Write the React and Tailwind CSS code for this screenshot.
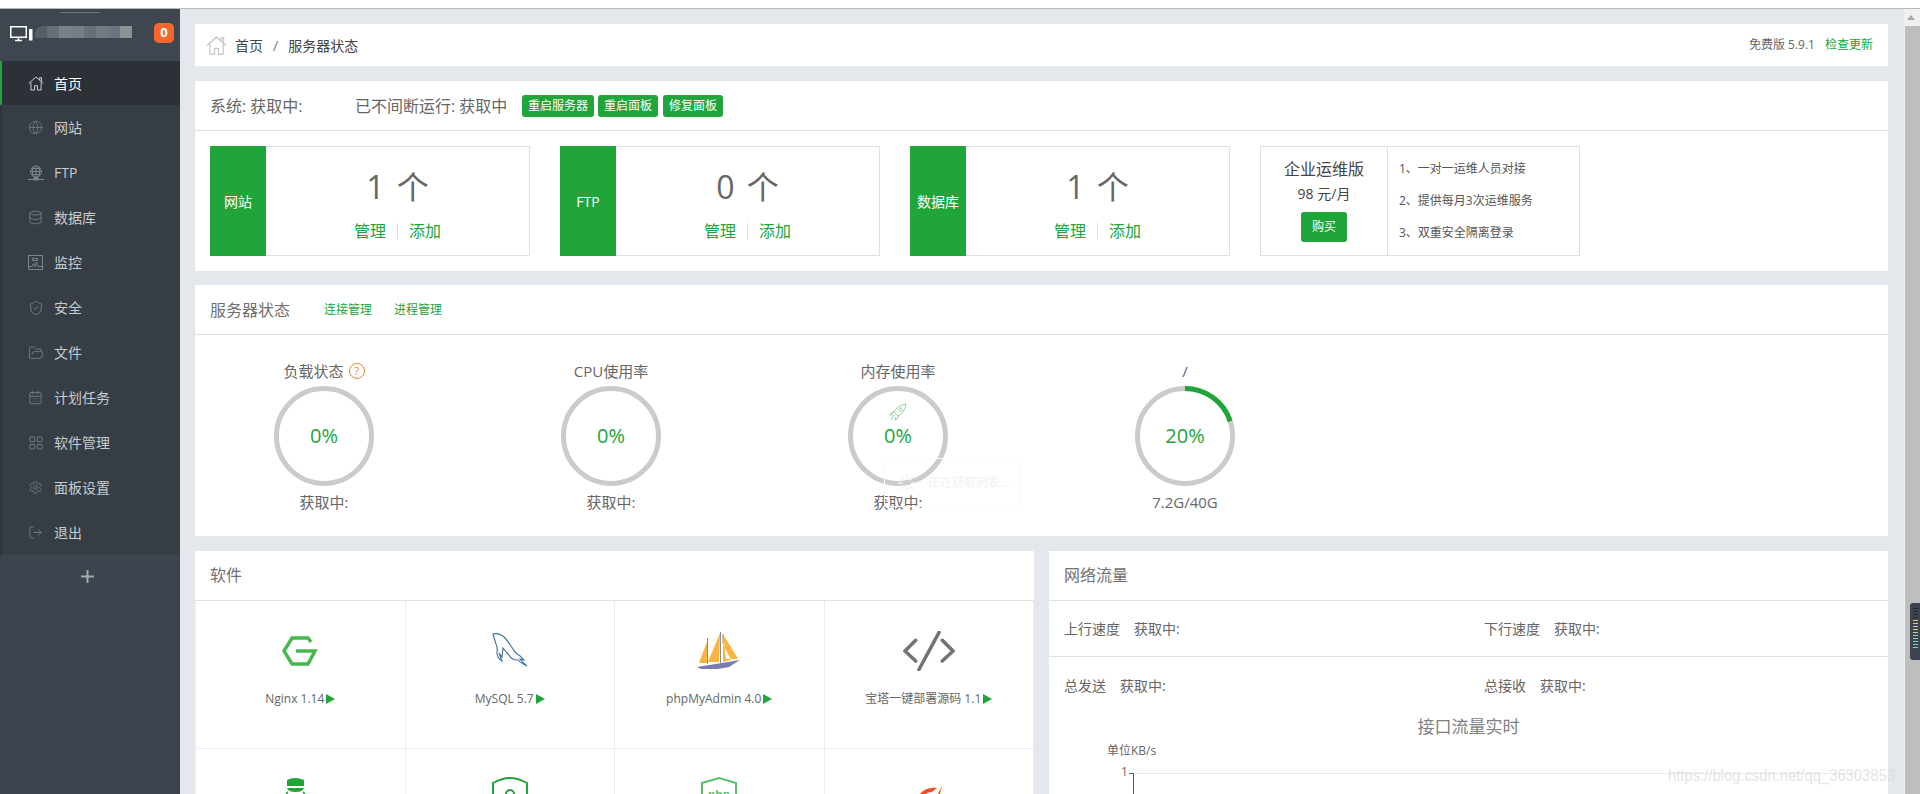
import React from 'react';
import { Globe, Database, ShieldCheck, FolderOpen, CalendarDays, LayoutGrid, Settings, LogOut } from 'lucide-react';

const HomeIcon = ({ className }) => (
    <svg viewBox="0 0 22 20" fill="none" stroke="currentColor" strokeWidth="1.3" className={className}>
        <path d="M1 10 11 1l10 9M16 5V2h2.5v5.5M4 8.5V19h5v-6h4v6h5V8.5" />
    </svg>
);

const FtpIcon = () => (
    <svg viewBox="0 0 16 16" fill="none" stroke="currentColor" strokeWidth="1" className="h-[16px] w-[16px]">
        <circle cx="8" cy="6.5" r="5.5" />
        <path d="M2.5 6.5h11M8 1v11M5.5 1.5c-1.6 3-1.6 7 0 10M10.5 1.5c1.6 3 1.6 7 0 10M3.5 3.5h9M3.5 9.5h9M0 14.5h16" />
        <rect x="6" y="12.5" width="4" height="2.5" fill="currentColor" />
    </svg>
);

const MonitorIcon = () => (
    <svg viewBox="0 0 15 15" fill="none" stroke="currentColor" strokeWidth="1" className="h-[15px] w-[15px]">
        <rect x="0.5" y="0.5" width="14" height="14" />
        <path d="M1 11.5h3l1.5-3 1.5 3 1.5-4.5 1.5 4.5H14M4.5 3.5h5v2h-5z" />
    </svg>
);

const menu = [
    { name: '首页', icon: <HomeIcon className="h-[15px] w-[16px]" />, active: true },
    { name: '网站', icon: <Globe size={15} strokeWidth={1.2} /> },
    { name: 'FTP', icon: <FtpIcon /> },
    { name: '数据库', icon: <Database size={15} strokeWidth={1.3} /> },
    { name: '监控', icon: <MonitorIcon /> },
    { name: '安全', icon: <ShieldCheck size={16} strokeWidth={1.3} /> },
    { name: '文件', icon: <FolderOpen size={16} strokeWidth={1.3} /> },
    { name: '计划任务', icon: <CalendarDays size={15} strokeWidth={1.3} /> },
    { name: '软件管理', icon: <LayoutGrid size={16} strokeWidth={1.3} /> },
    { name: '面板设置', icon: <Settings size={15} strokeWidth={1.2} /> },
    { name: '退出', icon: <LogOut size={15} strokeWidth={1.3} /> },
];

const mosaic = ['bg-[#565e67]', 'bg-[#666e76]', 'bg-[#78808a]', 'bg-[#777f86]', 'bg-[#686f77]', 'bg-[#747a82]', 'bg-[#6b7680]', 'bg-[#8d9297]'];

const Sidebar = () => (
    <aside className="relative flex w-[180px] shrink-0 flex-col bg-[#3c444d]">
        <div className="absolute left-[60px] top-[3px] h-px w-[40px] bg-[#6d747b]" />
        <div className="flex h-[52px] items-start bg-[#3e464f] pl-[10px] pt-[17px]">
            <svg viewBox="0 0 23 16" fill="none" stroke="#fff" className="h-[16px] w-[23px] shrink-0">
                <rect x="0.75" y="0.75" width="15.5" height="10.5" strokeWidth="1.5" />
                <path d="M5 14.5h7M8.5 12v2" strokeWidth="1.5" />
                <rect x="19" y="3" width="3.5" height="11.5" fill="#fff" stroke="none" />
            </svg>
            <div className="ml-[2px] flex h-[12px] w-[97px] overflow-hidden rounded-tl-[8px]">
                {mosaic.map((c, i) => <div key={i} className={'h-full flex-1 ' + c} />)}
            </div>
            <div className="ml-[22px] -mt-[3px] flex h-[20px] w-[20px] items-center justify-center rounded-[5px] bg-[#f7672b] text-[13px] font-bold text-white">0</div>
        </div>
        <nav className="bg-[#363d44]">
            {menu.map((m, i) => (
                <div key={m.name} className={'flex items-center border-l-2 pl-[26px] text-[14px] ' + (i === 0 ? 'h-[44px] ' : 'h-[45px] ') + (m.active ? 'border-[#20a53a] bg-[#2c3138] text-white' : 'border-[#2f353b] text-[#c8ccd0]')}>
                    <span className={'flex w-[26px] shrink-0 ' + (m.active ? 'text-[#d5d7da]' : 'text-[#7b8289]')}>{m.icon}</span>
                    {m.name}
                </div>
            ))}
        </nav>
        <div className="flex h-[42px] items-center justify-center pr-[6px] text-[#a5aab0]">
            <svg viewBox="0 0 13 13" stroke="currentColor" strokeWidth="2" className="h-[13px] w-[13px]"><path d="M6.5 0v13M0 6.5h13" /></svg>
        </div>
    </aside>
);

const StatCard = ({ label, count }) => (
    <div className="flex h-[110px] w-[320px] border border-[#dde1e6]">
        <div className="-my-px -ml-px flex w-[56px] shrink-0 items-center justify-center bg-[#20a53a] pt-[1px] text-[14px] text-white">{label}</div>
        <div className="flex flex-1 flex-col items-center">
            <div className="mt-[16px] h-[48px] text-[32px] leading-[48px] text-[#666] [word-spacing:4px]">{count} 个</div>
            <div className="mt-[8px] flex items-center text-[16px] leading-[24px] text-[#20a53a]">
                管理<span className="mx-[11px] h-[16px] w-px bg-[#ddd]" />添加
            </div>
        </div>
    </div>
);

const Ring = ({ percent, rocket }) => (
    <div className="relative flex h-[100px] w-[100px] items-center justify-center">
        <svg viewBox="0 0 100 100" className="absolute inset-0 h-[100px] w-[100px] -rotate-90" fill="none">
            <circle cx="50" cy="50" r="47.5" stroke="#cbcbcb" strokeWidth="5" />
            {percent > 0 && <circle cx="50" cy="50" r="47.5" stroke="#20a53a" strokeWidth="5" pathLength="100" strokeDasharray={`${percent} 100`} />}
        </svg>
        {rocket && (
            <svg viewBox="0 0 18 18" fill="none" stroke="#6cc57c" strokeWidth="0.8" className="absolute left-[41px] top-[17px] h-[18px] w-[18px]">
                <path d="M5 9c2-4 6-7 12-8-1 6-4 10-8 12zM5 9 2.5 9.5 1 12l3-.5M9 13l-.5 2.5L6 17l.5-3M5 12l-3 5" />
                <circle cx="11.5" cy="6.5" r="1.5" />
            </svg>
        )}
        <span className="relative text-[20px] text-[#20a53a]">{percent}%</span>
    </div>
);

const Gauge = ({ title, percent, note, help, rocket }) => (
    <div className="flex w-[200px] shrink-0 flex-col items-center text-[15px] text-[#666]">
        <div className="flex h-[24px] items-center leading-[24px]">
            {title}
            {help && <span className="ml-[5px] flex h-[16px] w-[16px] items-center justify-center rounded-full border border-[#f0862a] text-[11px] text-[#f0862a]">?</span>}
        </div>
        <div className="mt-[3px]"><Ring percent={percent} rocket={rocket} /></div>
        <div className="mt-[4px] leading-[24px]">{note}</div>
    </div>
);

const Arrow = () => <span className="ml-[2px] h-0 w-0 border-y-[5px] border-l-[9px] border-y-transparent border-l-[#20a53a]" />;

const soft = [
    {
        name: 'Nginx 1.14',
        icon: (
            <svg viewBox="0 0 36 30" fill="none" stroke="#46b64e" strokeWidth="3.4" className="h-[30px] w-[36px]">
                <path d="M29 6 26 2H10L2 15l8 13h16l7-13H14" />
            </svg>
        ),
    },
    {
        name: 'MySQL 5.7',
        icon: (
            <svg viewBox="0 0 36 36" fill="none" stroke="#3e7196" strokeWidth="1.1" className="h-[36px] w-[36px]">
                <path d="M1 1c4-1 8 0 12 4 5 5 7 11 11 15 3 2 5 3 8 7l-4-1c2 3 5 5 7 7-3-2-7-3-9-6-4 0-7-1-9-5-2-2-4-4-6-7l-1 9-3-4 3 8c-3-2-5-4-5-8 0-3 1-6-1-9-1-3-2-6-3-10z" />
            </svg>
        ),
    },
    {
        name: 'phpMyAdmin 4.0',
        icon: (
            <svg viewBox="0 0 44 38" className="h-[38px] w-[44px]">
                <path d="M11 7 2 31h8zM23 1 11 30h11zM26 2l15 25-12 0zM26 12v18l8-2z" fill="#fdb33c" />
                <path d="M10.5 6v26M23.5 0v31M26 2v10" stroke="#8a8a8a" strokeWidth="1" fill="none" />
                <path d="M0 35 43 28l-11 7-11 2H4z" fill="#7a7cb0" />
            </svg>
        ),
    },
    {
        name: '宝塔一键部署源码 1.1',
        icon: (
            <svg viewBox="0 0 52 40" fill="none" stroke="#737373" strokeWidth="3.6" strokeLinecap="round" className="h-[40px] w-[52px]">
                <path d="M12.7 9.3 2 20l10.7 10M36 1.5 16 38.5M39.3 9.3 50 20 39.3 30" />
            </svg>
        ),
    },
    {
        name: '',
        icon: (
            <svg viewBox="0 0 40 40" className="h-[40px] w-[40px] overflow-visible">
                <path d="M7 -1Q15 -5 24 -1V5H7z" fill="#20a53a" />
                <path d="M7 7H24Q23 11 15.5 11T7 7z" fill="#20a53a" />
                <path d="M8 11C4 14 5 20 5 24M23 11c4 3 3 9 3 13" stroke="#20a53a" strokeWidth="1.6" fill="none" />
            </svg>
        ),
    },
    {
        name: '',
        icon: (
            <svg viewBox="0 0 40 40" className="h-[40px] w-[40px] overflow-visible">
                <path d="M3 2Q12 -3 20 -3T37 2V30H3z" fill="none" stroke="#20a53a" strokeWidth="2" />
                <path d="M16 16v-3a4 4 0 0 1 8 0v3v14h-8z" fill="none" stroke="#20a53a" strokeWidth="2" />
            </svg>
        ),
    },
    {
        name: '',
        icon: (
            <svg viewBox="0 0 40 40" className="h-[40px] w-[40px] overflow-visible">
                <path d="M3 2 20 -3 37 2V30H3z" fill="none" stroke="#5cbf6b" strokeWidth="2" />
                <text x="20" y="18" textAnchor="middle" fontSize="12" fontWeight="700" fill="#5cbf6b" fontFamily="Liberation Sans, sans-serif">php</text>
            </svg>
        ),
    },
    {
        name: '',
        icon: (
            <svg viewBox="0 0 40 40" className="h-[40px] w-[40px] overflow-visible">
                <path d="M5 30C5 14 16 5 28 7l-5 4C15 11 11 19 12 30z" fill="#f1501f" />
                <path d="M33 5l-2 8-3 2z" fill="#f1501f" />
            </svg>
        ),
    },
];

const SoftCell = ({ item, first }) => (
    <div className={'flex h-[148px] flex-col items-center border-b border-r border-[#ececf6] ' + (first ? 'pt-[30px]' : 'pt-[32px]')}>
        <div className="flex h-[40px] items-center justify-center">{item.icon}</div>
        {item.name && (
            <div className="mt-[18px] flex h-[20px] items-center text-[12px] text-[#666]">
                {item.name}<Arrow />
            </div>
        )}
    </div>
);

const Stat = ({ label, className }) => (
    <div className={'flex gap-[14px] ' + className}>
        <span>{label}</span><span>获取中:</span>
    </div>
);

const App = () => (
    <div className="relative flex h-[794px] flex-col overflow-hidden bg-white font-['Open_Sans','Noto_Sans_CJK_SC',sans-serif]">
        <div className="h-[9px] shrink-0 border-b border-[#b8b8b8] bg-white" />
        <div className="flex min-h-0 flex-1">
            <Sidebar />
            <main className="flex min-w-0 flex-1 flex-col overflow-hidden bg-[#e4e7ec] pl-[15px] pr-[16px] pt-[15px]">
                <div className="flex h-[42px] shrink-0 items-center justify-between bg-white pl-[11px] pr-[15px]">
                    <div className="flex items-center text-[14px] text-[#444]">
                        <HomeIcon className="mr-[8px] h-[19px] w-[21px] text-[#c6c6c6]" />
                        首页<span className="mx-[10px] text-[#777]">/</span>服务器状态
                    </div>
                    <div className="flex items-center gap-[10px] text-[12px] text-[#666]">
                        免费版 5.9.1<span className="text-[#20a53a]">检查更新</span>
                    </div>
                </div>

                <section className="mt-[15px] h-[190px] shrink-0 bg-white">
                    <div className="flex h-[50px] items-center border-b border-[#e0e0e0] pl-[15px] text-[16px] text-[#666]">
                        <span className="w-[145px]">系统: 获取中:</span>
                        <span className="w-[167px] whitespace-nowrap">已不间断运行: 获取中</span>
                        <div className="flex gap-[4px] text-[12px] text-white">
                            <span className="flex h-[22px] w-[72px] items-center justify-center rounded-[3px] bg-[#20a53a]">重启服务器</span>
                            <span className="flex h-[22px] w-[60px] items-center justify-center rounded-[3px] bg-[#20a53a]">重启面板</span>
                            <span className="ml-[1px] flex h-[22px] w-[60px] items-center justify-center rounded-[3px] bg-[#20a53a]">修复面板</span>
                        </div>
                    </div>
                    <div className="flex gap-[30px] pl-[15px] pt-[15px]">
                        <StatCard label="网站" count={1} />
                        <StatCard label="FTP" count={0} />
                        <StatCard label="数据库" count={1} />
                        <div className="flex h-[110px] w-[320px] border border-[#dfdfdf]">
                            <div className="flex w-[127px] flex-col items-center border-r border-[#dfdfdf] text-[#444]">
                                <div className="mt-[10px] text-[16px] leading-[24px]">企业运维版</div>
                                <div className="text-[14px] leading-[26px]">98 元/月</div>
                                <div className="mt-[5px] flex h-[30px] w-[46px] items-center justify-center rounded-[3px] bg-[#20a53a] text-[12px] text-white">购买</div>
                            </div>
                            <div className="flex flex-col gap-[12px] pl-[11px] pt-[12px] text-[12px] leading-[20px] text-[#555]">
                                <div>1、一对一运维人员对接</div>
                                <div>2、提供每月3次运维服务</div>
                                <div>3、双重安全隔离登录</div>
                            </div>
                        </div>
                    </div>
                </section>

                <section className="relative mt-[14px] h-[251px] shrink-0 bg-white">
                    <div className="flex h-[50px] items-center border-b border-[#e0e0e0] pl-[15px] pt-[1px] text-[16px] text-[#707070]">
                        服务器状态
                        <span className="ml-[34px] text-[12px] text-[#20a53a]">连接管理</span>
                        <span className="ml-[22px] text-[12px] text-[#20a53a]">进程管理</span>
                    </div>
                    <div className="flex gap-[87px] pl-[29px] pt-[24px]">
                        <Gauge title="负载状态" percent={0} note="获取中:" help />
                        <Gauge title="CPU使用率" percent={0} note="获取中:" />
                        <Gauge title="内存使用率" percent={0} note="获取中:" rocket />
                        <Gauge title="/" percent={20} note="7.2G/40G" />
                    </div>
                    <div className="absolute left-[689px] top-[173px] flex h-[49px] w-[136px] items-center border border-[#fafafa] pl-[12px] text-[12px] text-[#f0f0f0]">
                        <svg viewBox="0 0 20 20" stroke="#f2f2f2" strokeWidth="1.6" className="mr-[11px] h-[20px] w-[20px]">
                            <path d="M10 1v5M10 14v5M1 10h5M14 10h5M3.6 3.6l3.5 3.5M12.9 12.9l3.5 3.5M3.6 16.4l3.5-3.5M12.9 7.1l3.5-3.5" />
                        </svg>
                        正在获取列表...
                    </div>
                </section>

                <div className="mt-[15px] flex min-h-0 flex-1 gap-[15px]">
                    <section className="min-w-0 flex-1 bg-white">
                        <div className="flex h-[50px] items-center border-b border-[#e0e0e0] pb-[2px] pl-[15px] text-[16px] text-[#707070]">软件</div>
                        <div className="grid grid-cols-4 border-l border-[#ececf6]">
                            {soft.map((s, i) => <SoftCell key={i} item={s} first={i < 4} />)}
                        </div>
                    </section>
                    <section className="min-w-0 flex-1 bg-white text-[14px] text-[#666]">
                        <div className="flex h-[50px] items-center border-b border-[#e0e0e0] pb-[2px] pl-[15px] text-[16px] text-[#707070]">网络流量</div>
                        <div className="grid h-[56px] grid-cols-2 items-center border-b border-[#e0e0e0] pl-[15px]">
                            <Stat label="上行速度" />
                            <Stat label="下行速度" className="pl-[8px]" />
                        </div>
                        <div className="grid h-[56px] grid-cols-2 items-center pl-[15px]">
                            <Stat label="总发送" />
                            <Stat label="总接收" className="pl-[8px]" />
                        </div>
                        <div className="flex h-[28px] items-center justify-center text-[17px] text-[#808080]">接口流量实时</div>
                        <div className="flex h-[18px] items-end pl-[58px] text-[12px] leading-[16px] text-[#666]">单位KB/s</div>
                        <div className="flex h-[50px] items-start">
                            <span className="ml-[72px] mt-[3px] w-[8px] text-[12px] leading-[20px] text-[#666]">1</span>
                            <svg viewBox="0 0 760 30" className="mt-[14px] h-[30px] w-[760px]" fill="none">
                                <path d="M0 .5h4" stroke="#555" />
                                <path d="M4 .5H730" stroke="#eaeaea" />
                                <path d="M4.5 0v30" stroke="#555" />
                            </svg>
                        </div>
                    </section>
                </div>
            </main>
            <div className="relative w-[16px] shrink-0 bg-[#eef0f2]">
                <div className="absolute left-[3px] top-[6px] h-0 w-0 border-x-[4px] border-b-[5px] border-x-transparent border-b-[#a9a9a9]" />
                <div className="absolute bottom-0 left-[1px] right-0 top-[17px] bg-[#bebebe]" />
            </div>
        </div>
        <div className="absolute left-[1910px] top-[603px] flex h-[57px] w-[10px] flex-col gap-[2px] rounded-l-[3px] bg-[#3d4350] pl-[3px] pt-[5px]">
            {['bg-[#23272e]', 'bg-[#23272e]', 'bg-[#23272e]', 'bg-[#23272e]', 'bg-[#e7c95a]', 'bg-[#e7d25f]', 'bg-[#dcd86a]', 'bg-[#c9d56f]', 'bg-[#b9d67c]', 'bg-[#a3d58a]', 'bg-[#8fd59a]', 'bg-[#7fd6ac]', 'bg-[#6fd6c0]', 'bg-[#6fd6c8]'].map((c, i) => (
                <div key={i} className={'h-px w-[5px] ' + c} />
            ))}
        </div>
        <div className="absolute left-[1668px] top-[765px] origin-left scale-x-[0.87] whitespace-nowrap font-['Liberation_Sans',sans-serif] text-[17px] leading-[22px] text-[#d8d8d8]/70">https://blog.csdn.net/qq_36303853</div>
    </div>
);

export default App;
